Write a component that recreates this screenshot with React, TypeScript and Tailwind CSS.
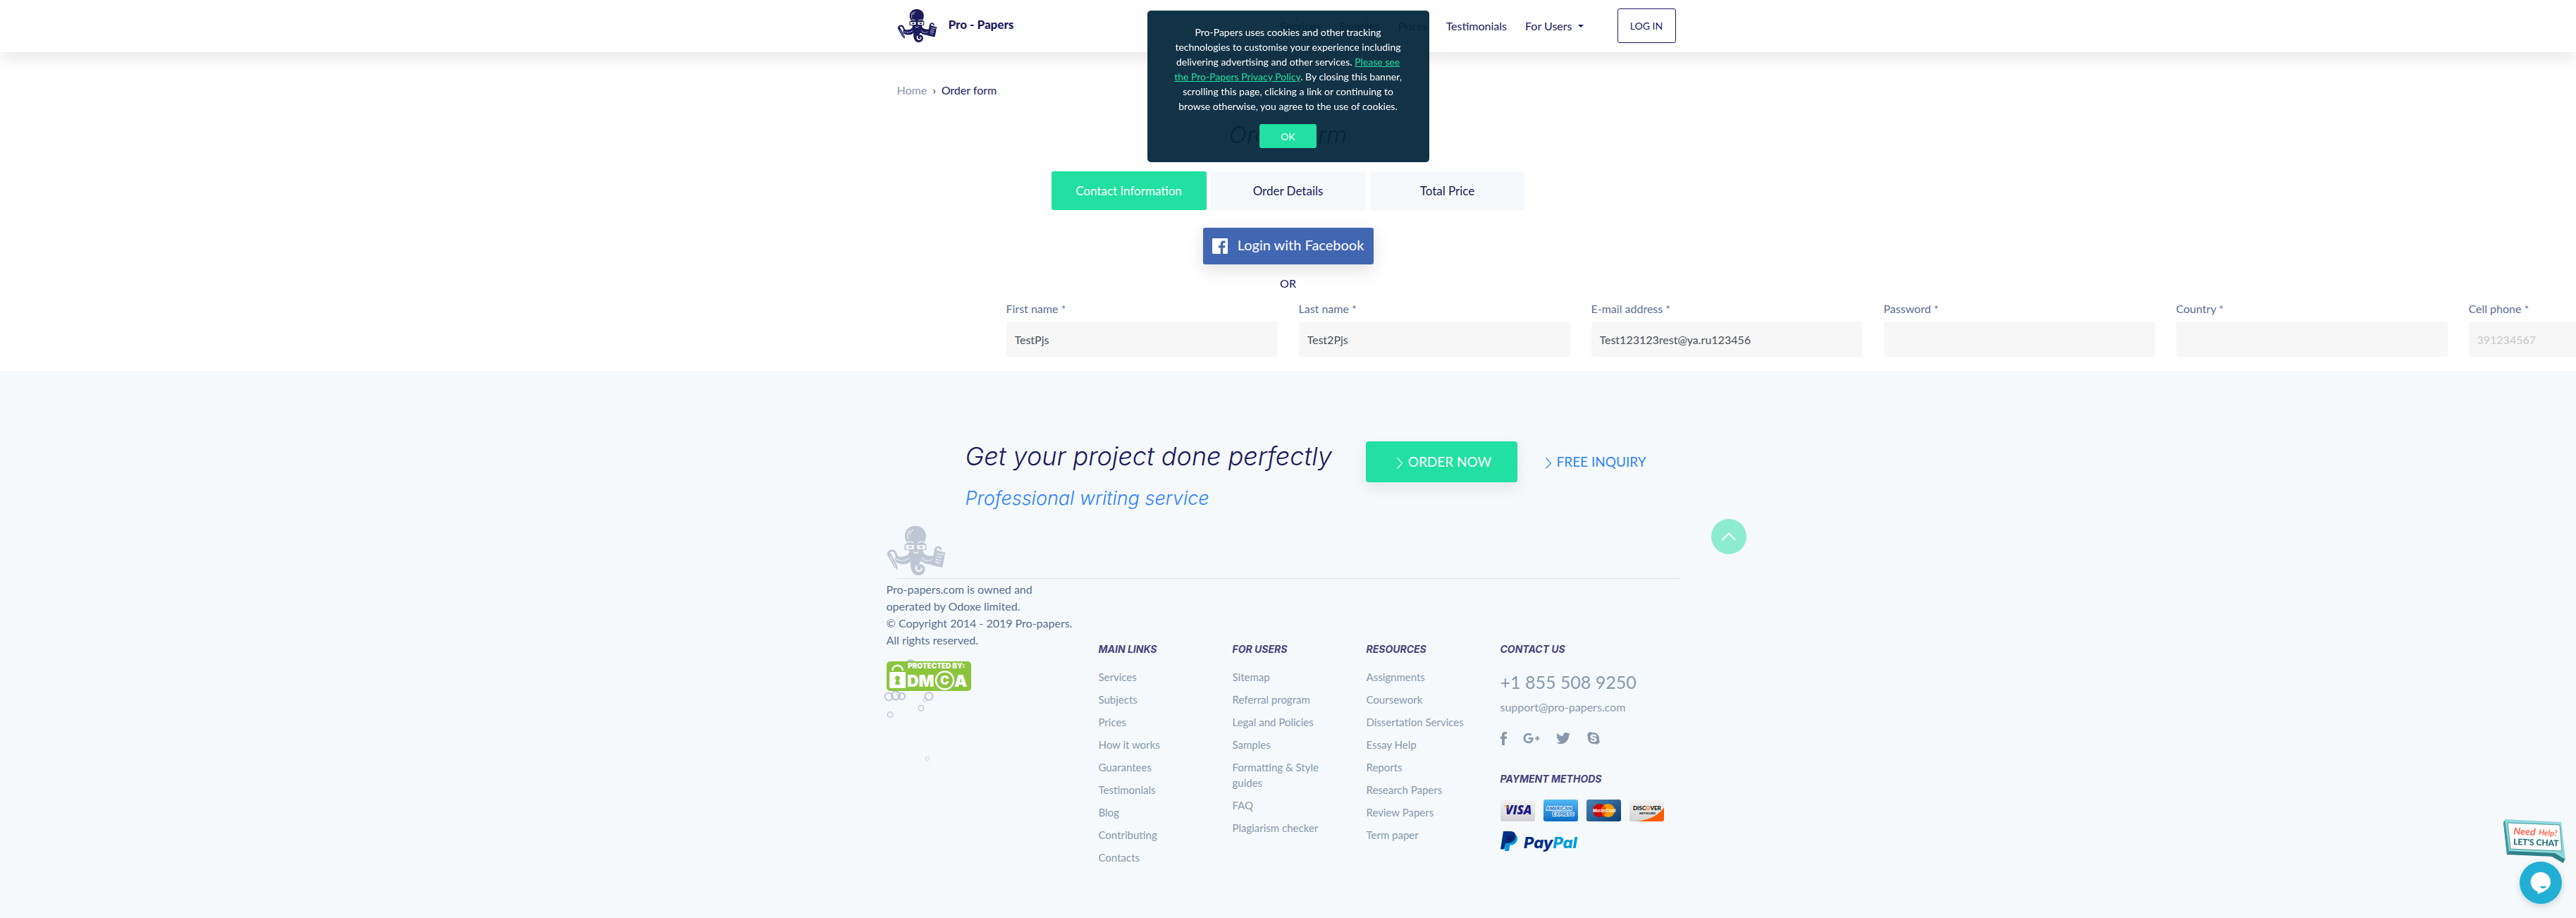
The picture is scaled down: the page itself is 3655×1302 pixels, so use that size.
import React from "react";
import { FaGooglePlusG, FaSkype, FaTwitter } from "react-icons/fa";

function Octopus({ className, hole }: { className: string; hole: string }) {
  return (
    <svg viewBox="0 0 84 70" className={className} fill="currentColor" aria-hidden="true">
      <path d="M40.800 0C50 0 56 6 55.800 14.500C55.600 19 54 21 54 24L54 34L28 34L28 24C28 21 26 19 25.800 14.500C25.600 6 32 0 40.800 0Z" />
      <path d="M31 34H52C51 38 54 41 59 42C63 43 66 42 68 42L66 54C62 55 56 55 51 51C48 49 47 51 47 53C47 56 42 58 41 55C40 50 36 48 33 51C28 56 17 55 11 50L13 43C18 44 24 44 28 42C32 40 33 37 31 34Z" />
      <path d="M36 44C33 57 34 70 45 70C54 70 57 59 51.500 55.500C46 53 42 58 44.500 62C46 64.500 50 63.500 49.500 60.500" fill="none" stroke="currentColor" strokeWidth="0" />
      <path d="M34.500 46C32 59 36 70 45 70C53.500 70 56 62 53.500 57.500C50 52 42.500 54.500 43 60C43.500 63 47.500 64 49 61.500L47.500 59.500C49.500 58 51.500 60 50.500 62.500C48.500 66 43 66.500 41 62C40 58 42 52 46 50Z" />
      <rect x="25.500" y="25.500" width="15" height="8.500" />
      <rect x="41.500" y="25.500" width="15" height="8.500" />
      <rect x="27.300" y="27" width="11.600" height="5.800" fill={hole} />
      <rect x="43.300" y="27" width="11.600" height="5.800" fill={hole} />
      <path d="M31 28.500H36V29.500C36 32 31 32 31 29.500ZM46.500 28.500H51.500V29.500C51.500 32 46.500 32 46.500 29.500Z" />
      <path d="M28 23.500C32 21.500 36 22 38 24M44 24C47 22 51 21.500 54 23.500M37.500 36.500C40 39 43 39 45.500 36.500" fill="none" stroke={hole} strokeWidth="1.200" />
      <path d="M30.500 18C29 13 30.500 9 33 6.500M33.500 12C33.500 9.500 35 7 38 5" fill="none" stroke={hole} strokeWidth="1.500" strokeDasharray="2 1" />
      <path d="M14 47C20 51 28 49 33 45M50 45C54 50 60 51 65 47" fill="none" stroke={hole} strokeWidth="1.400" strokeDasharray="1.500 0.800" />
      <path d="M2 40C4 33 12 34 13 40C14 43 16 45 18 46" fill="none" stroke="currentColor" strokeWidth="3" />
      <path d="M0.500 40.500L5 37.500L15 55.500L16 62.500L10.500 58Z" />
      <path d="M5 43L12 56M8 41L14 53M11 57.500L14.500 55.500" stroke={hole} strokeWidth="0.900" />
      <path d="M69 36C69 28 77 29 77 34" fill="none" stroke="currentColor" strokeWidth="2.600" />
      <path d="M68 33.500L83.500 38L79 59L63.500 55.500Z" />
      <path d="M71.500 39L79 41M70.500 43L78 45M69.500 47L77 49M69 51C71 49 73 55 75 52" fill="none" stroke={hole} strokeWidth="1.200" />
      <path d="M78 40C82 39 84 43 82 46" fill="none" stroke={hole} strokeWidth="0.900" />
    </svg>
  );
}

const fields = [
  { id: "first", label: "First name *", value: "TestPjs" },
  { id: "last", label: "Last name *", value: "Test2Pjs" },
  { id: "email", label: "E-mail address *", value: "Test123123rest@ya.ru123456" },
  { id: "password", label: "Password *", value: "" },
  { id: "country", label: "Country *", value: "" },
  { id: "phone", label: "Cell phone *", value: "", placeholder: "391234567" },
];

const columns = [
  { title: "MAIN LINKS", links: ["Services", "Subjects", "Prices", "How it works", "Guarantees", "Testimonials", "Blog", "Contributing", "Contacts"] },
  { title: "FOR USERS", links: ["Sitemap", "Referral program", "Legal and Policies", "Samples", "Formatting & Style guides", "FAQ", "Plagiarism checker"] },
  { title: "RESOURCES", links: ["Assignments", "Coursework", "Dissertation Services", "Essay Help", "Reports", "Research Papers", "Review Papers", "Term paper"] },
];

function Header() {
  return (
    <header className="h-[74px] shrink-0 bg-white shadow-[0_8px_24px_rgba(0,0,0,0.1)]">
      <div className="mx-auto flex h-full max-w-[1110px] items-center justify-between pr-[5px] pb-px">
        <a href="#" className="flex items-center gap-4">
          <Octopus className="h-[47px] w-[57px] text-[#1b1a5c]" hole="#ffffff" />
          <span className="pb-1 text-[17px] leading-6 font-black">Pro - Papers</span>
        </a>
        <nav className="flex items-center gap-[26px]">
          <a href="#">Services</a>
          <a href="#">Samples</a>
          <a href="#">Prices</a>
          <a href="#">Testimonials</a>
          <a href="#" className="flex items-center gap-2">
            For Users
            <span className="border-x-4 border-t-4 border-x-transparent border-t-[#1b1a5c]" />
          </a>
          <button className="ml-[22px] h-[49px] w-[83px] rounded-[3px] border border-[#1b1a5c] text-sm">LOG IN</button>
        </nav>
      </div>
    </header>
  );
}

function CookieBanner() {
  return (
    <div className="fixed top-[15px] left-1/2 flex w-[400px] -translate-x-1/2 flex-col items-center rounded-[5px] bg-[#002339]/93 px-[30px] py-5 text-center text-sm leading-[21px] text-white">
      <p>
        Pro-Papers uses cookies and other tracking technologies to customise your experience including delivering
        advertising and other services.{" "}
        <a href="#" className="text-[#22e0a1] underline">Please see the Pro-Papers Privacy Policy</a>. By closing this
        banner, scrolling this page, clicking a link or continuing to browse otherwise, you agree to the use of cookies.
      </p>
      <button className="mt-[15px] h-[34px] w-[81px] rounded-[3px] bg-[#22e0a1]">OK</button>
    </div>
  );
}

function OrderForm() {
  return (
    <main className="h-[452px] shrink-0 overflow-hidden">
      <div className="mx-auto flex max-w-[1110px] gap-2 pt-[42px] leading-6">
        <a href="#" className="text-[#8898ad]">Home</a>
        <span>›</span>
        <span>Order form</span>
      </div>
      <h1 className="mt-[31px] text-center font-['Inter'] text-[33px] leading-[40px] font-light italic">Order form</h1>
      <div className="mt-8 flex justify-center gap-[6px] text-[17px]">
        <button className="h-[55px] w-[220px] rounded-[3px] bg-[#22e0a1] text-white">Contact Information</button>
        <button className="h-[55px] w-[220px] rounded-[3px] bg-[#f5f9fc]">Order Details</button>
        <button className="h-[55px] w-[220px] rounded-[3px] bg-[#f5f9fc]">Total Price</button>
      </div>
      <div className="mt-[25px] flex justify-center">
        <button className="flex h-[52px] w-[242px] items-center justify-center gap-[14px] rounded-[3px] bg-[#4267b2] pb-1 text-[20px] text-white shadow-[0_8px_24px_rgba(0,0,0,0.12)]">
          <svg viewBox="0 0 22 22" className="mt-1 size-[22px]" fill="currentColor" aria-hidden="true">
            <path d="M1.200 0H20.800Q22 0 22 1.200V20.800Q22 22 20.800 22H15.200V13.500H18L18.500 10.200H15.200V8Q15.200 6.500 16.800 6.500H18.600V3.600Q17.600 3.400 16 3.400Q11.800 3.400 11.800 7.700V10.200H8.900V13.500H11.800V22H1.200Q0 22 0 20.800V1.200Q0 0 1.200 0Z" />
          </svg>
          Login with Facebook
        </button>
      </div>
      <p className="mt-[15px] text-center leading-6">OR</p>
      <form className="ml-[calc(50%-400px)] flex gap-[30px] pt-3">
        {fields.map((f) => (
          <div key={f.id} className="w-[385px] shrink-0">
            <label htmlFor={f.id} className="block leading-6 text-[#5b6e92]">{f.label}</label>
            <input
              id={f.id}
              defaultValue={f.value}
              placeholder={f.placeholder}
              className="mt-[6px] h-[50px] w-full rounded-[3px] bg-[#f7f7f7] px-3 text-[#495057] placeholder:text-[#c8c8c8]"
            />
          </div>
        ))}
      </form>
    </main>
  );
}

function Chevron() {
  return (
    <svg viewBox="0 0 8 16" className="mt-1 h-4 w-2" fill="none" stroke="currentColor" strokeWidth="1.200" aria-hidden="true">
      <path d="M0.500 0.500L7.500 8L0.500 15.500" />
    </svg>
  );
}

function DmcaBadge() {
  return (
    <svg viewBox="0 0 120 42" className="relative block h-[42px] w-[120px]" role="img" aria-label="Protected by DMCA">
      <rect width="120" height="42" rx="5" fill="#8bc53f" />
      <rect x="4" y="15" width="23" height="23" rx="1" fill="#fff" />
      <path d="M8 13C9 3.500 22 3.500 23 13" fill="none" stroke="#fff" strokeWidth="2.600" />
      <path d="M15.500 20.500A3.300 3.300 0 0 1 17.500 26.500L19 33H12L13.500 26.500A3.300 3.300 0 0 1 15.500 20.500Z" fill="#8bc53f" />
      <g fill="#fff" fontFamily="Inter, sans-serif" fontWeight="900">
        <text x="30" y="10" fontSize="10">PROTECTED BY:</text>
        <text x="29" y="36" fontSize="23">DM</text>
        <text x="96" y="36" fontSize="23">A</text>
        <text x="76" y="33" fontSize="17">C</text>
      </g>
      <circle cx="82.500" cy="27" r="12.500" fill="none" stroke="#fff" strokeWidth="2.400" />
    </svg>
  );
}

function Bubbles() {
  return (
    <svg viewBox="0 0 80 150" className="absolute -top-1 -left-2 h-[150px] w-20" fill="none" stroke="#bfc7d5" strokeWidth="2" aria-hidden="true">
      <circle cx="42" cy="8" r="7" fill="#bfc7d5" stroke="none" />
      <circle cx="11" cy="54" r="5.500" />
      <circle cx="21" cy="52.500" r="6" />
      <circle cx="29.500" cy="53.500" r="4.500" />
      <circle cx="24" cy="50" r="2.500" strokeWidth="1" />
      <circle cx="68" cy="53.500" r="5.500" />
      <circle cx="62.500" cy="58.500" r="2.800" strokeWidth="1" />
      <circle cx="57" cy="70.500" r="3.700" strokeWidth="1.400" />
      <circle cx="13" cy="79.500" r="3.700" strokeWidth="1.400" />
      <circle cx="66" cy="142" r="2.700" strokeWidth="1" opacity="0.7" />
    </svg>
  );
}

function Cards() {
  const card = "h-[31px] w-[49px]";
  return (
    <div className="flex gap-3" aria-label="Accepted cards">
      <svg viewBox="0 0 49 31" className={card}>
        <defs>
          <linearGradient id="silver" x1="0" y1="0" x2="0" y2="1"><stop stopColor="#f4f4f4" /><stop offset="1" stopColor="#d2d2d2" /></linearGradient>
          <linearGradient id="sky" x1="0" y1="0" x2="0" y2="1"><stop stopColor="#53b7f3" /><stop offset="1" stopColor="#0d6fc4" /></linearGradient>
          <linearGradient id="steel" x1="0" y1="0" x2="1" y2="1"><stop stopColor="#4b86b4" /><stop offset="1" stopColor="#0b3f77" /></linearGradient>
        </defs>
        <rect width="49" height="31" rx="3" fill="url(#silver)" />
        <text x="7" y="21" fontFamily="Open Sans, sans-serif" fontStyle="italic" fontWeight="800" fontSize="17" fill="#1a1a86">VISA</text>
        <path d="M4 8.500H9.500L12 15C10.500 11.500 8 10 4 8.500Z" fill="#f7941d" />
      </svg>
      <svg viewBox="0 0 49 31" className={card}>
        <rect width="49" height="31" rx="3" fill="url(#sky)" />
        <g fontFamily="Inter, sans-serif" fontWeight="800" fontSize="6.500" fill="#1479cd" stroke="#fff" strokeWidth="1.600" paintOrder="stroke">
          <text x="4" y="15">AMERICAN</text>
          <text x="13" y="22.500">EXPRESS</text>
        </g>
      </svg>
      <svg viewBox="0 0 49 31" className={card}>
        <rect width="49" height="31" rx="3" fill="url(#steel)" />
        <circle cx="18.500" cy="15.500" r="9.500" fill="#cc0000" />
        <circle cx="30.500" cy="15.500" r="9.500" fill="#ff9900" />
        <path d="M24.500 8.200A9.500 9.500 0 0 0 24.500 22.800A9.500 9.500 0 0 0 24.500 8.200Z" fill="#e25a00" />
        <text x="9" y="18" fontFamily="Inter, sans-serif" fontStyle="italic" fontWeight="700" fontSize="5.500" fill="#fff">MasterCard</text>
      </svg>
      <svg viewBox="0 0 49 31" className={card}>
        <rect width="49" height="31" rx="3" fill="url(#silver)" />
        <path d="M49 11V28Q49 31 46 31H10C28 29 42 22 49 11Z" fill="#ff5c00" />
        <g fontFamily="Lato, sans-serif" fontWeight="900" fill="#111">
          <text x="5" y="15" fontSize="8">DISC<tspan fill="#f47216">O</tspan>VER</text>
          <text x="14" y="20.500" fontSize="4.500">NETWORK</text>
        </g>
      </svg>
    </div>
  );
}

function PayPal() {
  return (
    <svg viewBox="0 0 112 30" className="mt-[14px] h-[30px] w-[112px]" role="img" aria-label="PayPal">
      <path d="M8 4H20C25 6 25 12 22 16C20 19 17 19.500 13.500 19.500L12 28H6Z" fill="#009cde" />
      <path d="M4 0H14C20 0 22.500 4 21 9C19.500 14.500 15.500 16.500 10 16.500H7.500L5.500 25.500H0Z" fill="#003087" />
      <path d="M10 6.500H18C20 6.500 21 7 21.300 7.500C20.500 13.500 16.500 16.500 10 16.500H7.700Z" fill="#012169" />
      <text x="33" y="24" fontFamily="Inter, sans-serif" fontStyle="italic" fontWeight="800" fontSize="22" fill="#003087">
        Pay<tspan fill="#009cde">Pal</tspan>
      </text>
    </svg>
  );
}

function Footer() {
  const title = "font-['Inter'] text-[14px] leading-6 font-bold italic text-[#47427a]";
  return (
    <footer className="flex-1 bg-[#f5f9fc] pt-[100px] pb-16">
      <div className="relative mx-auto max-w-[1140px]">
        <div className="flex h-[194px] items-start pl-[112px]">
          <div className="-mt-px w-[568px]">
            <h2 className="font-['Inter'] text-[36px] leading-[44px] font-light italic">Get your project done perfectly</h2>
            <p className="mt-4 font-['Inter'] text-[27px] leading-[44px] font-light italic text-[#3183f5]">Professional writing service</p>
          </div>
          <button className="flex h-[58px] w-[215px] items-center justify-center gap-2 rounded-[4px] bg-[#22e0a1] pl-2 text-[19px] text-white shadow-[0_8px_20px_rgba(0,0,0,0.08)]">
            <Chevron />
            ORDER NOW
          </button>
          <a href="#" className="ml-10 flex h-[58px] items-center gap-2 text-[19px] text-[#3183f5]">
            <Chevron />
            FREE INQUIRY
          </a>
        </div>
        <button aria-label="Back to top" className="absolute top-[110px] -right-20 flex size-[50px] items-center justify-center rounded-full bg-[#8eecce] text-white">
          <svg viewBox="0 0 20 12" className="h-3 w-5" fill="none" stroke="currentColor" strokeWidth="1.800" aria-hidden="true">
            <path d="M0.500 11L10 1.500L19.500 11" />
          </svg>
        </button>
        <hr className="mx-[15px] border-[#d9dfe4]" />
        <div className="flex">
          <div className="-mt-[75px] w-[300px] shrink-0 leading-6 text-[#5b6e8f]">
            <Octopus className="relative h-[70px] w-[84px] text-[#bfc7d5]" hole="#f5f9fc" />
            <p className="mt-2">
              Pro-papers.com is owned and
              <br />
              operated by Odoxe limited.
              <br />
              © Copyright 2014 - 2019 Pro-papers.
              <br />
              All rights reserved.
            </p>
            <div className="relative mt-[18px]">
              <Bubbles />
              <DmcaBadge />
            </div>
          </div>
          {columns.map((c) => (
            <section key={c.title} className="w-[190px] shrink-0 pt-[88px] pr-[30px] pl-px">
              <h3 className={title}>{c.title}</h3>
              <ul className="mt-4 flex flex-col gap-[10px] text-[15px] leading-[22px] text-[#8898ad]">
                {c.links.map((l) => (
                  <li key={l}>
                    <a href="#">{l}</a>
                  </li>
                ))}
              </ul>
            </section>
          ))}
          <section className="shrink-0 pt-[88px] pl-px text-[#8898ad]">
            <h3 className={title}>CONTACT US</h3>
            <p className="mt-[18px] text-[25px] leading-8">+1 855 508 9250</p>
            <a href="#" className="mt-2 block leading-6">support@pro-papers.com</a>
            <div className="mt-5 flex h-6 items-center gap-[23px] text-[20px]">
              <a href="#" aria-label="Facebook">
                <svg viewBox="0 0 9 19" className="h-[19px] w-[9px]" fill="currentColor" aria-hidden="true">
                  <path d="M2 19V10H0V6.500H2V4.500Q2 0 6.300 0H9V3.300H7Q5.800 3.300 5.800 4.500V6.500H9L8.600 10H5.800V19Z" />
                </svg>
              </a>
              <a href="#" aria-label="Google Plus"><FaGooglePlusG className="size-6" /></a>
              <a href="#" aria-label="Twitter"><FaTwitter /></a>
              <a href="#" aria-label="Skype"><FaSkype /></a>
            </div>
            <h3 className={"mt-[34px] mb-[17px] " + title}>PAYMENT METHODS</h3>
            <Cards />
            <PayPal />
          </section>
        </div>
      </div>
    </footer>
  );
}

function ChatWidget() {
  return (
    <button aria-label="Open chat" className="fixed right-[11px] bottom-[10px] h-[130px] w-[92px]">
      <svg viewBox="0 0 92 130" className="h-full w-full">
        <defs>
          <filter id="chatShadow" x="-30%" y="-30%" width="160%" height="160%">
            <feDropShadow dx="0" dy="3" stdDeviation="4" floodOpacity="0.15" />
          </filter>
        </defs>
        <path d="M0 4L2 2L10 46L71 51L85 61L87 56L84 62L83 61L67 52L5 49Z" fill="#2f8087" />
        <path d="M0 4L4 0L8 48L5 51Z" fill="#3f9aa1" />
        <path d="M5 50L10 44L72 47L88 55L85 62L72 53Z" fill="#2f8087" />
        <path d="M2 0L82 4L88 57L73 48L8 45Z" fill="#8ed9dd" />
        <path d="M6 5L80 8L83 45L10 42Z" fill="#ffffff" stroke="#2f8087" strokeWidth="0.800" />
        <g transform="rotate(3 44 24)" fontStyle="italic" fontFamily="Lato, sans-serif" fontWeight="900" fill="#fb6f5c">
          <text x="14" y="23" fontSize="14">Need</text>
          <text x="50" y="22" fontSize="11">Help?</text>
        </g>
        <text x="14" y="37" fontFamily="Lato, sans-serif" fontWeight="900" fontSize="12" fill="#1f6f7b" transform="rotate(2 44 34)">LET'S CHAT</text>
        <circle cx="53" cy="90" r="30" fill="#20afd5" filter="url(#chatShadow)" />
        <path d="M53 75A14 14 0 0 1 67 89C67 97 60 101 56 103L48 106L49 102.500A14 14 0 0 1 53 75Z" fill="#fff" />
        <path d="M52 95H61C60 99 53 99 52 95Z" fill="#20afd5" />
      </svg>
    </button>
  );
}

export default function App() {
  return (
    <div className="flex min-h-screen flex-col overflow-x-hidden bg-white font-['Lato',sans-serif] text-base text-[#1b1a5c]">
      <Header />
      <OrderForm />
      <Footer />
      <CookieBanner />
      <ChatWidget />
    </div>
  );
}
